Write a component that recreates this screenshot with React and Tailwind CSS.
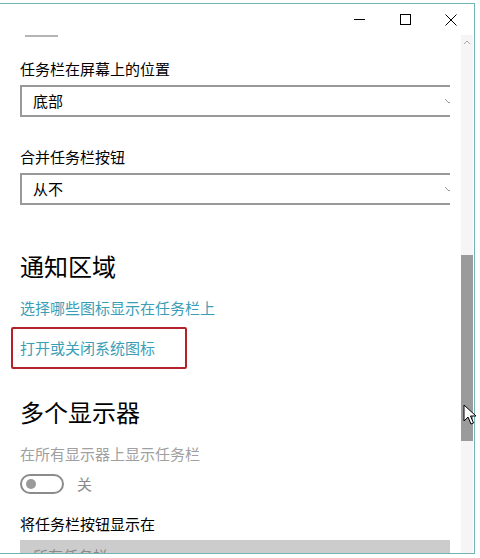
import React from "react"

const font = { fontFamily: '"Noto Sans CJK SC", "Noto Sans", sans-serif' }

function Dropdown({ value, disabled }) {
  return (
    <div
      className={`mt-[6px] ml-[20px] w-[442px] h-[32px] flex items-center justify-between pl-[11px] pr-[6px] border-2 ${
        disabled ? "bg-[#cccccc] border-[#cccccc] text-[#8a8a8a]" : "border-[#999999] text-black"
      } text-[15px] leading-[20px] shrink-0`}
    >
      <span>{value}</span>
      <svg width="10" height="6" viewBox="0 0 10 6" className="text-[#9a9a9a]">
        <path d="M1 1 L5 5 L9 1" fill="none" stroke="currentColor" strokeWidth="1" />
      </svg>
    </div>
  )
}

export default function App() {
  return (
    <div className="relative w-[480px] h-[558px] bg-white overflow-hidden" style={font}>
      <div className="mt-[3px] w-[475px] h-[551px] border-t border-r border-b border-[#72b4b4] flex flex-col">
        {/* title bar */}
        <div className="h-[31px] flex justify-end shrink-0">
          <div className="w-[46px] flex items-center justify-center">
            <div className="w-[11px] h-px bg-black" />
          </div>
          <div className="w-[46px] flex items-center justify-center">
            <div className="w-[11px] h-[11px] border border-black" />
          </div>
          <div className="w-[46px] flex items-center justify-center">
            <svg width="12" height="12" viewBox="0 0 12 12">
              <path d="M0.5 0.5 L11.5 11.5 M11.5 0.5 L0.5 11.5" stroke="black" strokeWidth="1" />
            </svg>
          </div>
        </div>

        <div className="flex flex-1 min-h-0">
          {/* content */}
          <div className="w-[450px] overflow-hidden flex flex-col">
            <div className="ml-[25px] w-[33px] h-[2px] bg-[#b5b5b5] shrink-0" />

            <div className="mt-[22px] ml-[20px] text-[15px] leading-[20px] text-black">任务栏在屏幕上的位置</div>
            <Dropdown value="底部" />

            <div className="mt-[30px] ml-[20px] text-[15px] leading-[20px] text-black">合并任务栏按钮</div>
            <Dropdown value="从不" />

            <div className="mt-[45px] ml-[20px] text-[24px] leading-[32px] text-black">通知区域</div>
            <div className="mt-[16px] ml-[20px] text-[15px] leading-[20px] text-[#3a9eb6]">选择哪些图标显示在任务栏上</div>

            <div className="mt-[9px] ml-[11px] w-[176px] h-[42px] border-2 border-[#b3222a] rounded-[2px] flex items-center pl-[7px] shrink-0">
              <span className="text-[15px] leading-[20px] text-[#3a9eb6]">打开或关闭系统图标</span>
            </div>

            <div className="mt-[27px] ml-[20px] text-[24px] leading-[32px] text-black">多个显示器</div>
            <div className="mt-[16px] ml-[20px] text-[15px] leading-[20px] text-[#a0a0a0]">在所有显示器上显示任务栏</div>

            <div className="mt-[10px] ml-[20px] flex items-center gap-[13px] shrink-0">
              <div className="w-[44px] h-[20px] rounded-full border-2 border-[#8c8c8c] flex items-center pl-[4px]">
                <div className="w-[10px] h-[10px] rounded-full bg-[#9a9a9a]" />
              </div>
              <span className="text-[15px] leading-[20px] text-[#8a8a8a]">关</span>
            </div>

            <div className="mt-[20px] ml-[20px] text-[15px] leading-[20px] text-black">将任务栏按钮显示在</div>
            <Dropdown value="所有任务栏" disabled />
          </div>

          {/* scrollbar */}
          <div className="ml-[11px] w-[12px] bg-[#f6f4f4] flex flex-col items-center">
            <svg width="8" height="5" viewBox="0 0 8 5" className="mt-[5px]">
              <path d="M1 4 L4 1 L7 4" fill="none" stroke="#a8a8a8" strokeWidth="1" />
            </svg>
            <div className="mt-[210px] w-full h-[186px] bg-[#9b9b9b]" />
          </div>
        </div>
      </div>

      {/* mouse cursor */}
      <svg className="absolute left-[463px] top-[404px]" width="14" height="22" viewBox="0 0 14 22">
        <path d="M1 1 L1 17 L5 13 L8 20 L10.5 19 L7.5 12 L13 12 Z" fill="white" stroke="black" strokeWidth="1" />
      </svg>
    </div>
  )
}
